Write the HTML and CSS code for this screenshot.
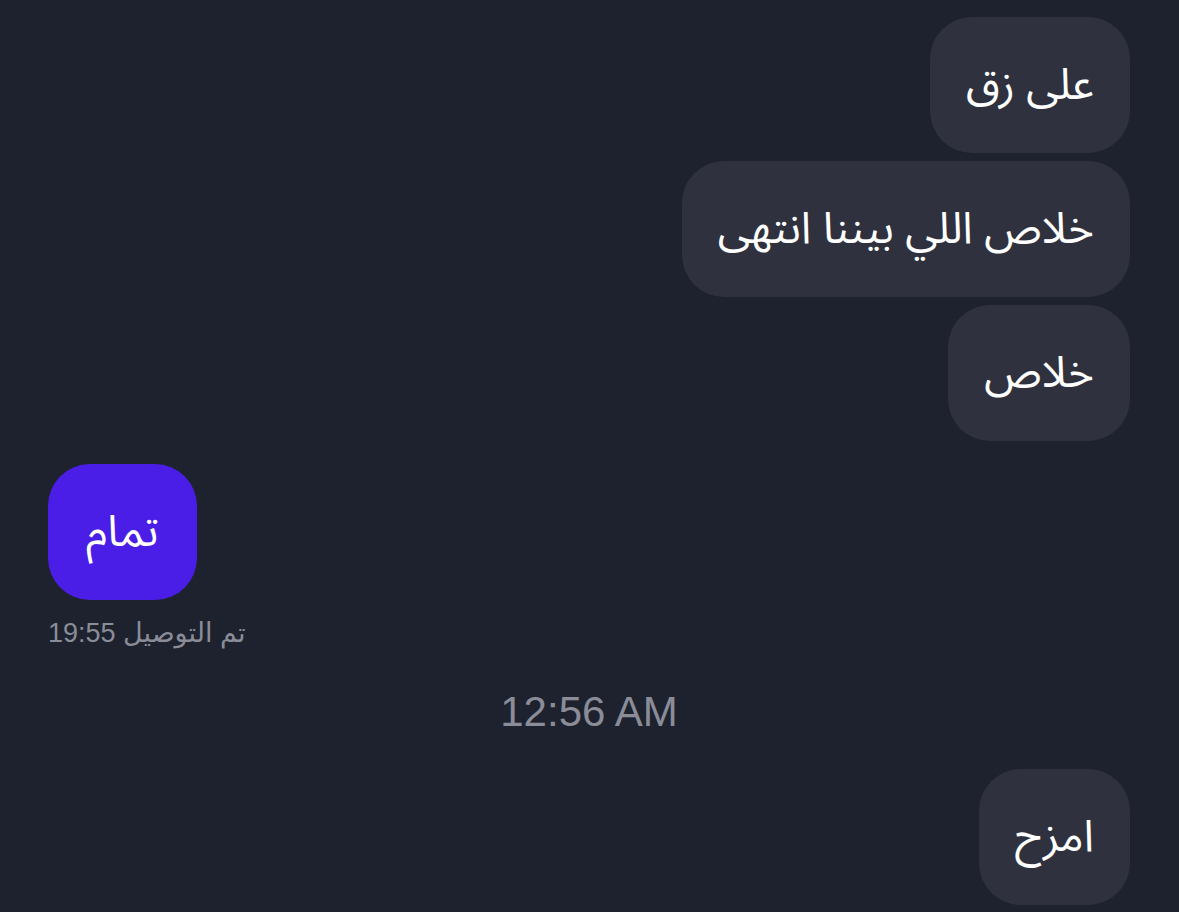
FILE: index.html
```html
<!DOCTYPE html>
<html lang="ar">
<head>
<meta charset="utf-8">
<link rel="stylesheet" href="styles.css">
</head>
<body>
<div class="chat">
  <div class="bubble out" dir="rtl">على زق</div>
  <div class="bubble out" dir="rtl">خلاص اللي بيننا انتهى</div>
  <div class="bubble out" dir="rtl">خلاص</div>
  <div class="bubble in" dir="rtl">تمام</div>
  <div class="status" dir="rtl">تم التوصيل 19:55</div>
  <div class="time">12:56 AM</div>
  <div class="bubble out" dir="rtl">امزح</div>
</div>
</body>
</html>
```
FILE: styles.css
```css
html, body {
  margin: 0;
  padding: 0;
  background: #1e222e;
}
body {
  width: 1179px;
  height: 912px;
  overflow: hidden;
  font-family: "Noto Sans Arabic", "DejaVu Sans", "Noto Sans", sans-serif;
}
.chat {
  display: flex;
  flex-direction: column;
  padding: 17px 49px 0 48px;
  gap: 8px;
}
.bubble {
  color: #ffffff;
  font-size: 44px;
  line-height: 56px;
  padding: 40px 36px;
  border-radius: 42px;
  white-space: nowrap;
}
.out {
  align-self: flex-end;
  background: #2f323e;
}
.in {
  align-self: flex-start;
  background: #4a1ee6;
  margin-top: 15px;
  padding-left: 38px;
  padding-right: 38px;
}
.status {
  align-self: flex-start;
  color: #8a8d98;
  font-size: 27px;
  line-height: 32px;
  margin-top: 9px;
  font-family: "Liberation Sans", "DejaVu Sans", sans-serif;
}
.time {
  align-self: center;
  color: #8a8d98;
  font-family: "Liberation Sans", Arial, sans-serif;
  font-size: 42px;
  line-height: 48px;
  margin-top: 31px;
  margin-bottom: 25px;
}
```
